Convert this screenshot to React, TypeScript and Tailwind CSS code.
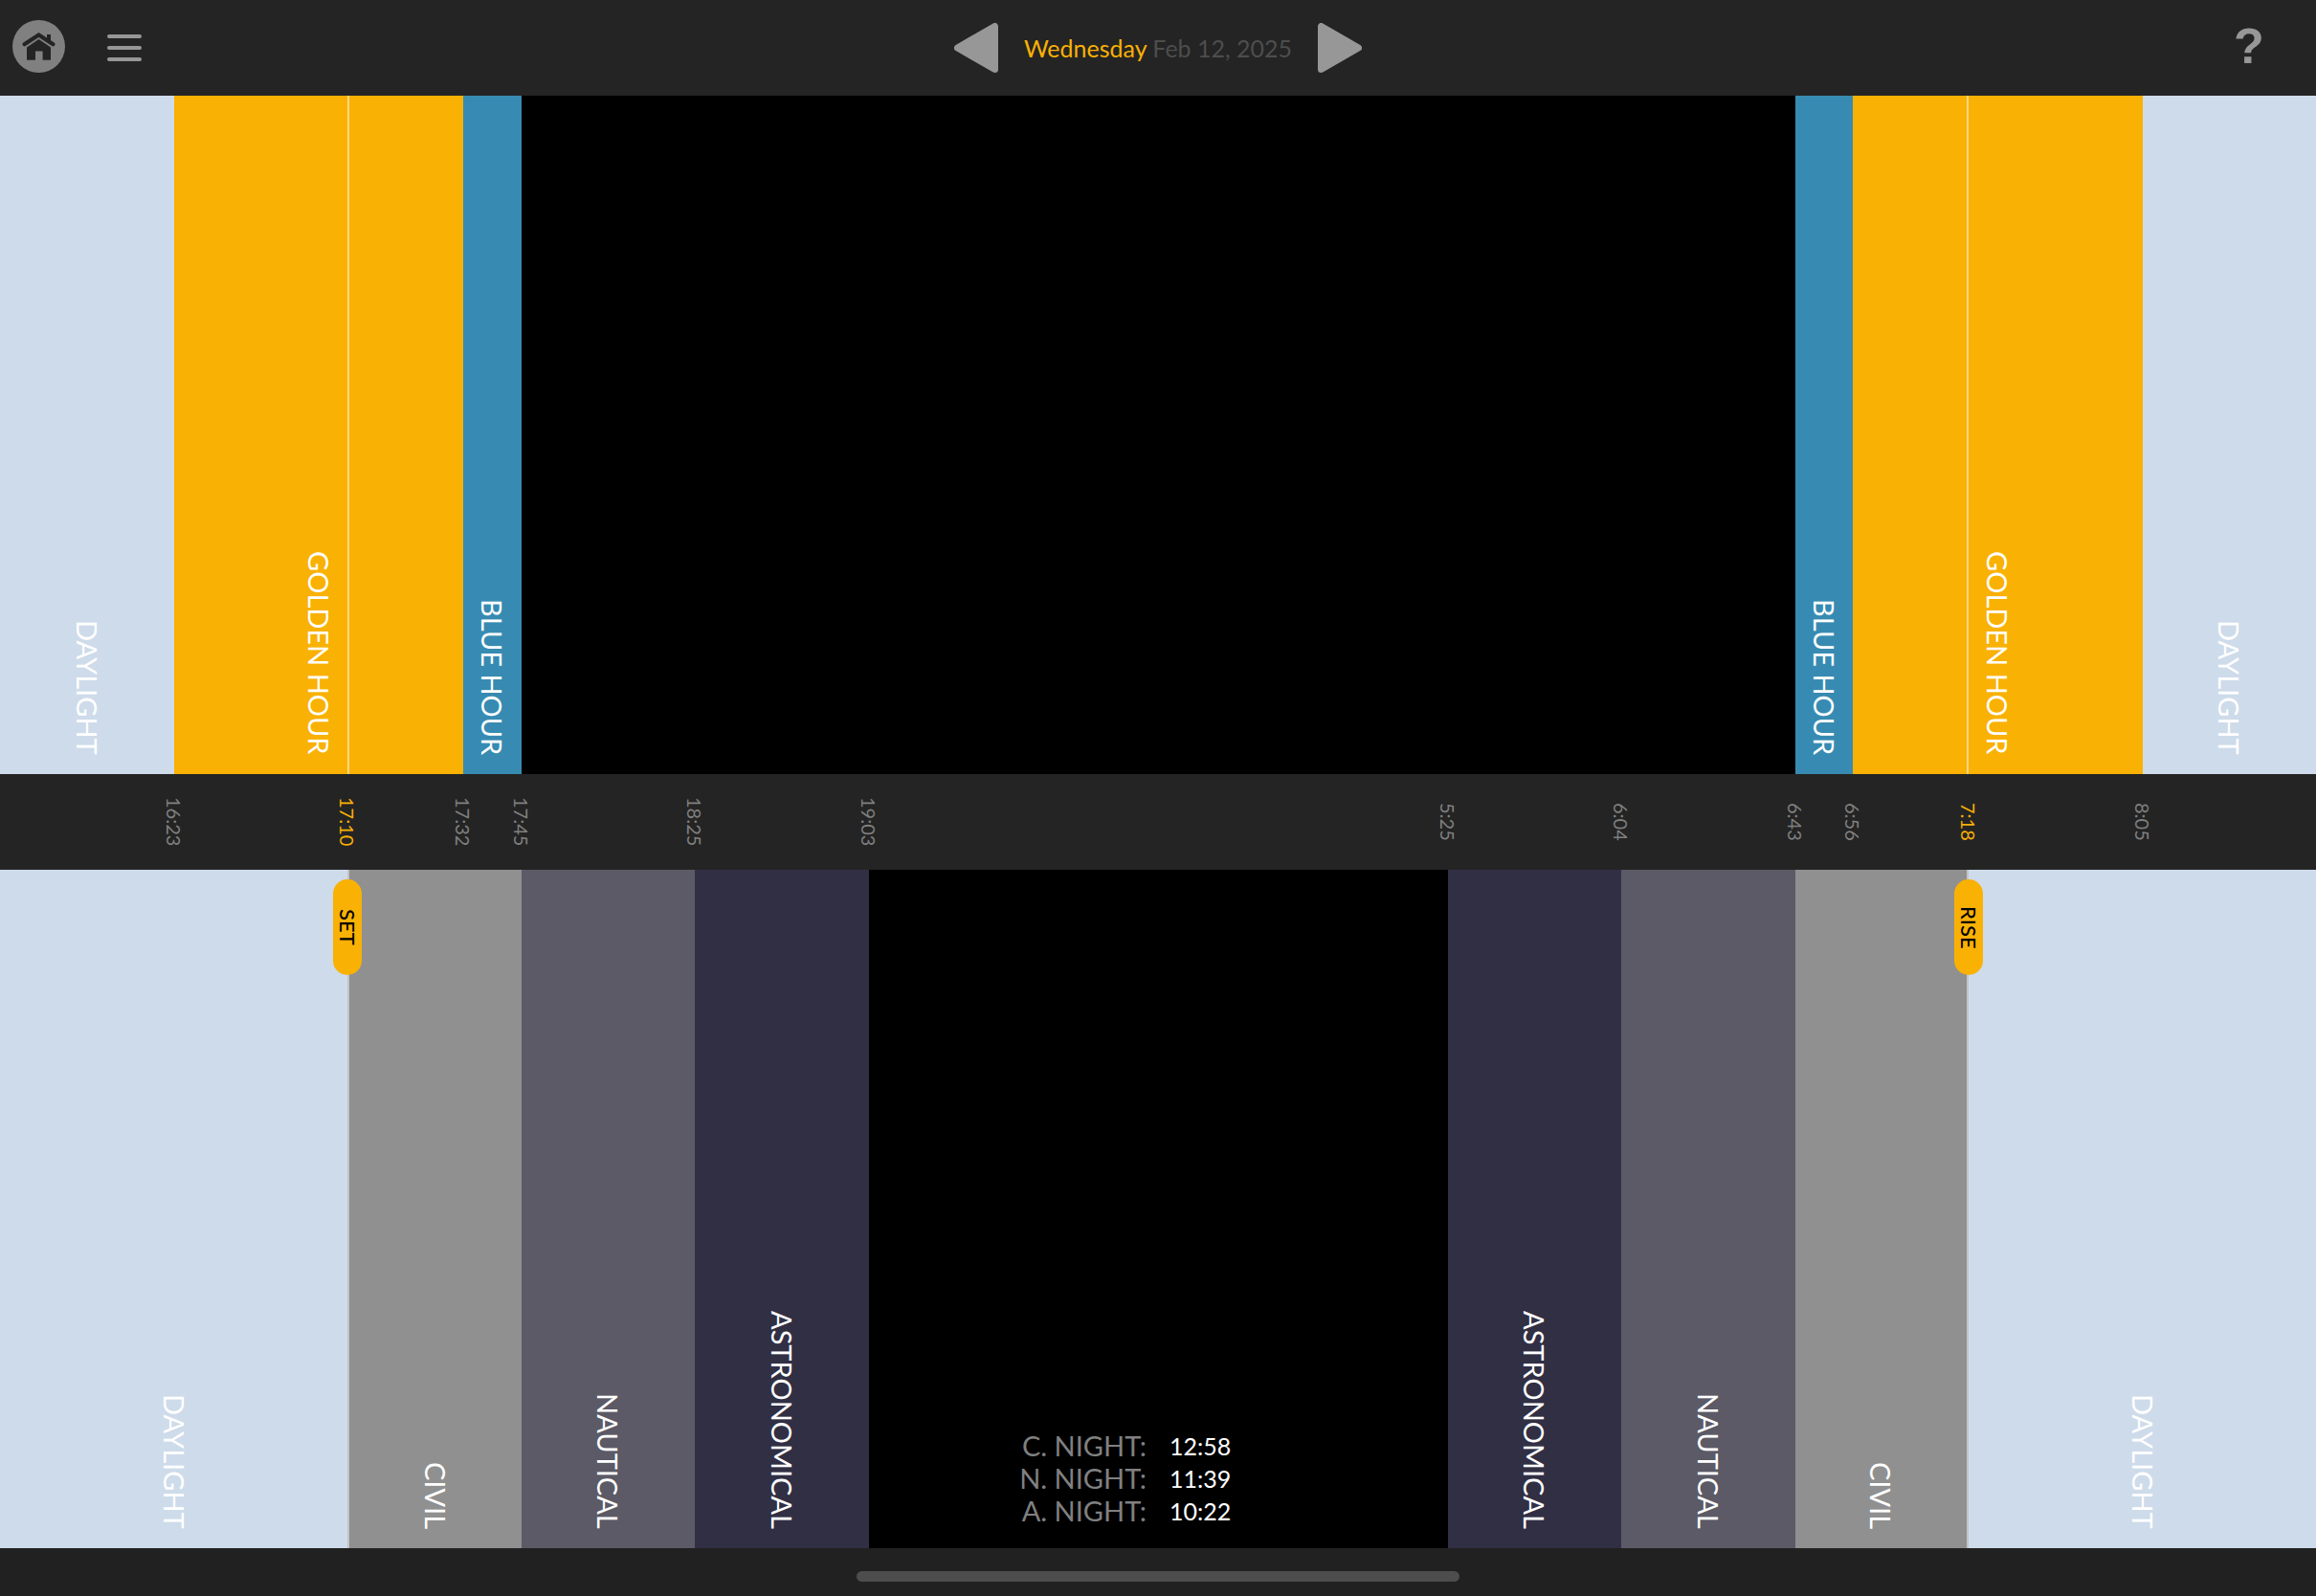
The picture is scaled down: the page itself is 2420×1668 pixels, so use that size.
import { clsx } from 'clsx';

interface Phase {
  name: string;
  className: string;
  align?: string;
}

// The timeline is 40 units wide, every column span below is in those units
const hours: Phase[] = [
  { name: 'DAYLIGHT', className: 'col-span-3 bg-[#cedbea]' },
  { name: 'GOLDEN HOUR', className: 'col-span-3 bg-[#f9b104]', align: 'justify-end pr-3' },
  { name: '', className: 'col-span-2 border-l-2 border-[#fcd781] bg-[#f9b104]' },
  { name: 'BLUE HOUR', className: 'col-span-1 bg-[#378bb2]' },
  { name: '', className: 'col-span-22 bg-black' },
  { name: 'BLUE HOUR', className: 'col-span-1 bg-[#378bb2]' },
  { name: '', className: 'col-span-2 border-r-2 border-[#fcd781] bg-[#f9b104]' },
  { name: 'GOLDEN HOUR', className: 'col-span-3 bg-[#f9b104]', align: 'justify-start pl-3' },
  { name: 'DAYLIGHT', className: 'col-span-3 bg-[#cedbea]' },
];

const twilightsSet: Phase[] = [
  { name: 'DAYLIGHT', className: 'col-span-6 bg-[#cedbea]' },
  { name: 'CIVIL', className: 'col-span-3 border-l-2 border-[#c4c4c6] bg-[#909091]' },
  { name: 'NAUTICAL', className: 'col-span-3 bg-[#5b5a66]' },
  { name: 'ASTRONOMICAL', className: 'col-span-3 bg-[#312f44]' },
];

const twilightsRise: Phase[] = [
  { name: 'ASTRONOMICAL', className: 'col-span-3 bg-[#312f44]' },
  { name: 'NAUTICAL', className: 'col-span-3 bg-[#5b5a66]' },
  { name: 'CIVIL', className: 'col-span-3 border-r-2 border-[#c4c4c6] bg-[#909091]' },
  { name: 'DAYLIGHT', className: 'col-span-6 bg-[#cedbea]' },
];

const times = [
  { time: '16:23', col: 'col-start-3' },
  { time: '17:10', col: 'col-start-6', sun: true },
  { time: '17:32', col: 'col-start-8' },
  { time: '17:45', col: 'col-start-9' },
  { time: '18:25', col: 'col-start-12' },
  { time: '19:03', col: 'col-start-15' },
  { time: '5:25', col: 'col-start-25' },
  { time: '6:04', col: 'col-start-28' },
  { time: '6:43', col: 'col-start-31' },
  { time: '6:56', col: 'col-start-32' },
  { time: '7:18', col: 'col-start-34', sun: true },
  { time: '8:05', col: 'col-start-37' },
];

const nights = [
  { label: 'C. NIGHT:', value: '12:58' },
  { label: 'N. NIGHT:', value: '11:39' },
  { label: 'A. NIGHT:', value: '10:22' },
];

function Band({ name, className, align = 'justify-center' }: Phase) {
  return (
    <div className={clsx('flex items-end pb-5', align, className)}>
      {name && (
        <span className="whitespace-nowrap text-[29px] leading-9 text-white [writing-mode:vertical-rl]">
          {name}
        </span>
      )}
    </div>
  );
}

function SunBadge({ label, className }: { label: string; className: string }) {
  return (
    <div
      className={clsx(
        'absolute top-[10px] flex h-[100px] w-[30px] -translate-x-1/2 items-center justify-center rounded-full bg-[#f9b104]',
        className
      )}
    >
      <span className="text-[22px] leading-7 font-medium text-black [writing-mode:vertical-rl]">{label}</span>
    </div>
  );
}

function Header() {
  return (
    <header className="grid h-[100px] grid-cols-[1fr_auto_1fr] items-center bg-[#242424]">
      <div className="flex items-center gap-11 pl-[13px]">
        <button type="button" aria-label="Home" className="pb-1">
          <svg className="h-[55px] w-[55px]" viewBox="0 0 55 55">
            <circle cx="27.5" cy="27.5" r="27.5" fill="#808080" />
            <path
              d="M12.5 25.2 27.5 15.4 42.5 25.2"
              fill="none"
              stroke="#242424"
              strokeWidth="4.2"
              strokeLinecap="round"
              strokeLinejoin="miter"
            />
            <path d="M36 15h4v8l-4-3z" fill="#242424" />
            <path d="M27.5 20 40 28.4V41.8H31.6V32.4H24V41.8H15V28.4z" fill="#242424" />
          </svg>
        </button>
        <button type="button" aria-label="Menu">
          <svg className="h-7 w-9" viewBox="0 0 36 28" fill="#979797">
            <rect width="36" height="4" rx="2" />
            <rect y="12" width="36" height="4" rx="2" />
            <rect y="24" width="36" height="4" rx="2" />
          </svg>
        </button>
      </div>

      <div className="flex w-[426px] items-center justify-between">
        <button type="button" aria-label="Previous day">
          <svg className="h-[52px] w-[46px]" viewBox="0 0 46 52">
            <path
              d="M42.5 3.5V48.5L3.5 26z"
              fill="#979797"
              stroke="#979797"
              strokeWidth="7"
              strokeLinejoin="round"
            />
          </svg>
        </button>
        <p className="whitespace-nowrap text-[25px] leading-8 text-[#4d4d4d]">
          <span className="text-[#f9b104]">Wednesday</span> Feb 12, 2025
        </p>
        <button type="button" aria-label="Next day">
          <svg className="h-[52px] w-[46px]" viewBox="0 0 46 52">
            <path
              d="M3.5 3.5V48.5L42.5 26z"
              fill="#979797"
              stroke="#979797"
              strokeWidth="7"
              strokeLinejoin="round"
            />
          </svg>
        </button>
      </div>

      <div className="flex justify-end pr-[42px] pb-1">
        <button
          type="button"
          aria-label="Help"
          className="w-14 font-['Liberation_Sans',sans-serif] text-[52px] leading-[60px] font-bold text-[#979797]"
        >
          ?
        </button>
      </div>
    </header>
  );
}

export default function App() {
  return (
    <div className="flex min-h-screen flex-col bg-[#212121] font-['Lato',sans-serif]">
      <Header />

      <section className="grid flex-[1_1_0px] grid-cols-40">
        {hours.map((phase, i) => (
          <Band key={i} {...phase} />
        ))}
      </section>

      <section className="grid h-[100px] grid-cols-40 items-center bg-[#242424]">
        {times.map(({ time, col, sun }) => (
          <div key={time} className={clsx('col-span-2 row-start-1 flex justify-center', col)}>
            <time
              className={clsx(
                'text-[20px] leading-6 [writing-mode:vertical-rl]',
                sun ? 'text-[#f9b104]' : 'text-[#808080]'
              )}
            >
              {time}
            </time>
          </div>
        ))}
      </section>

      <section className="relative grid flex-[1_1_0px] grid-cols-40">
        {twilightsSet.map((phase) => (
          <Band key={phase.name} {...phase} />
        ))}
        <div className="col-span-10 flex items-end bg-black pb-[22px]">
          <table className="w-full table-fixed">
            <tbody>
              {nights.map(({ label, value }) => (
                <tr key={label} className="h-[34px] leading-[34px]">
                  <th scope="row" className="w-1/2 p-0 pr-3 text-right text-[29px] font-normal text-[#808080]">
                    {label}
                  </th>
                  <td className="p-0 pl-3 text-[25px] text-white">{value}</td>
                </tr>
              ))}
            </tbody>
          </table>
        </div>
        {twilightsRise.map((phase) => (
          <Band key={phase.name} {...phase} />
        ))}
        <SunBadge label="SET" className="left-[15%]" />
        <SunBadge label="RISE" className="left-[85%]" />
      </section>

      <footer className="flex h-[50px] justify-center pt-6">
        <div className="h-[11px] w-[26%] rounded-full bg-[#4d4d4d]" />
      </footer>
    </div>
  );
}
